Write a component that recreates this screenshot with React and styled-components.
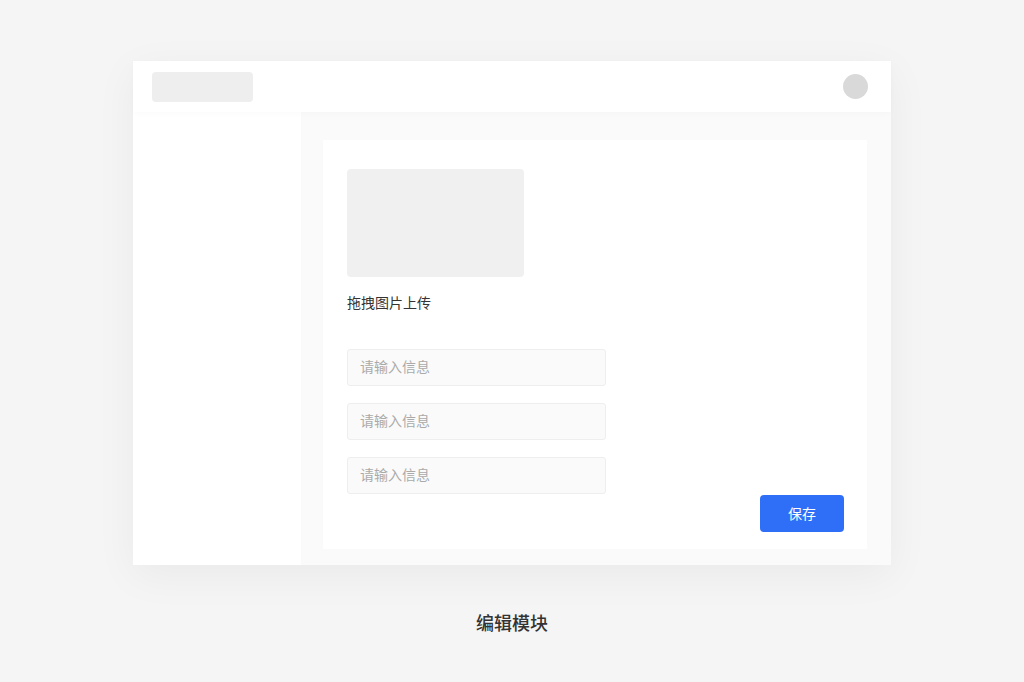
import React from "react";
import styled, { createGlobalStyle } from "styled-components";

const GlobalStyle = createGlobalStyle`
  html, body {
    margin: 0;
    padding: 0;
    background: #f5f5f5;
    font-family: "Noto Sans CJK SC", "Noto Sans", sans-serif;
  }
`;

const App = () => {
  return (
    <>
      <GlobalStyle />
      <Page>
        <Window>
          <Header>
            <Logo />
            <Avatar />
          </Header>
          <Body>
            <Sidebar />
            <Main>
              <Card>
                <ImageDrop />
                <DropLabel>拖拽图片上传</DropLabel>
                <Fields>
                  <Field placeholder="请输入信息" />
                  <Field placeholder="请输入信息" />
                  <Field placeholder="请输入信息" />
                </Fields>
                <Actions>
                  <SaveButton>保存</SaveButton>
                </Actions>
              </Card>
            </Main>
          </Body>
        </Window>
        <Caption>编辑模块</Caption>
      </Page>
    </>
  );
};

export default App;

const Page = styled.div`
  width: 1024px;
  height: 682px;
  display: flex;
  flex-direction: column;
  align-items: center;
  padding-top: 61px;
  box-sizing: border-box;
`;

const Window = styled.div`
  width: 758px;
  height: 504px;
  display: flex;
  flex-direction: column;
  background: #ffffff;
  box-shadow: 0 10px 40px rgba(0, 0, 0, 0.05);
`;

const Header = styled.div`
  height: 51px;
  flex-shrink: 0;
  display: flex;
  align-items: center;
  justify-content: space-between;
  padding: 0 23px 0 19px;
  background: #ffffff;
  position: relative;
  z-index: 1;
  box-shadow: 0 2px 6px rgba(0, 0, 0, 0.02);
`;

const Logo = styled.div`
  width: 101px;
  height: 30px;
  border-radius: 4px;
  background: #eeeeee;
`;

const Avatar = styled.div`
  width: 25px;
  height: 25px;
  border-radius: 50%;
  background: #d9d9d9;
`;

const Body = styled.div`
  flex: 1;
  display: flex;
`;

const Sidebar = styled.div`
  width: 168px;
  background: #ffffff;
`;

const Main = styled.div`
  flex: 1;
  background: #fafafa;
  padding: 28px 24px 16px 22px;
  display: flex;
`;

const Card = styled.div`
  flex: 1;
  background: #ffffff;
  padding: 29px 23px 16px 24px;
  display: flex;
  flex-direction: column;
`;

const ImageDrop = styled.div`
  width: 177px;
  height: 108px;
  border-radius: 4px;
  background: #f0f0f0;
`;

const DropLabel = styled.div`
  margin-top: 15px;
  font-size: 14px;
  line-height: 20px;
  color: #333333;
`;

const Fields = styled.div`
  margin-top: 37px;
  display: flex;
  flex-direction: column;
  gap: 17px;
`;

const Field = styled.input`
  width: 259px;
  height: 37px;
  box-sizing: border-box;
  border: 1px solid #eeeeee;
  border-radius: 3px;
  background: #fafafa;
  padding: 0 12px 3px;
  font-family: inherit;
  font-size: 14px;
  color: #333333;
  outline: none;

  &::placeholder {
    color: #aaaaaa;
  }
`;

const Actions = styled.div`
  display: flex;
  justify-content: flex-end;
  margin-top: 1px;
`;

const SaveButton = styled.button`
  width: 84px;
  height: 37px;
  border: none;
  border-radius: 4px;
  background: #2f6ff7;
  color: #ffffff;
  font-family: inherit;
  font-size: 14px;
  padding-bottom: 2px;
  cursor: pointer;
`;

const Caption = styled.div`
  margin-top: 45px;
  font-size: 18px;
  font-weight: 500;
  color: #333333;
  line-height: 24px;
`;
